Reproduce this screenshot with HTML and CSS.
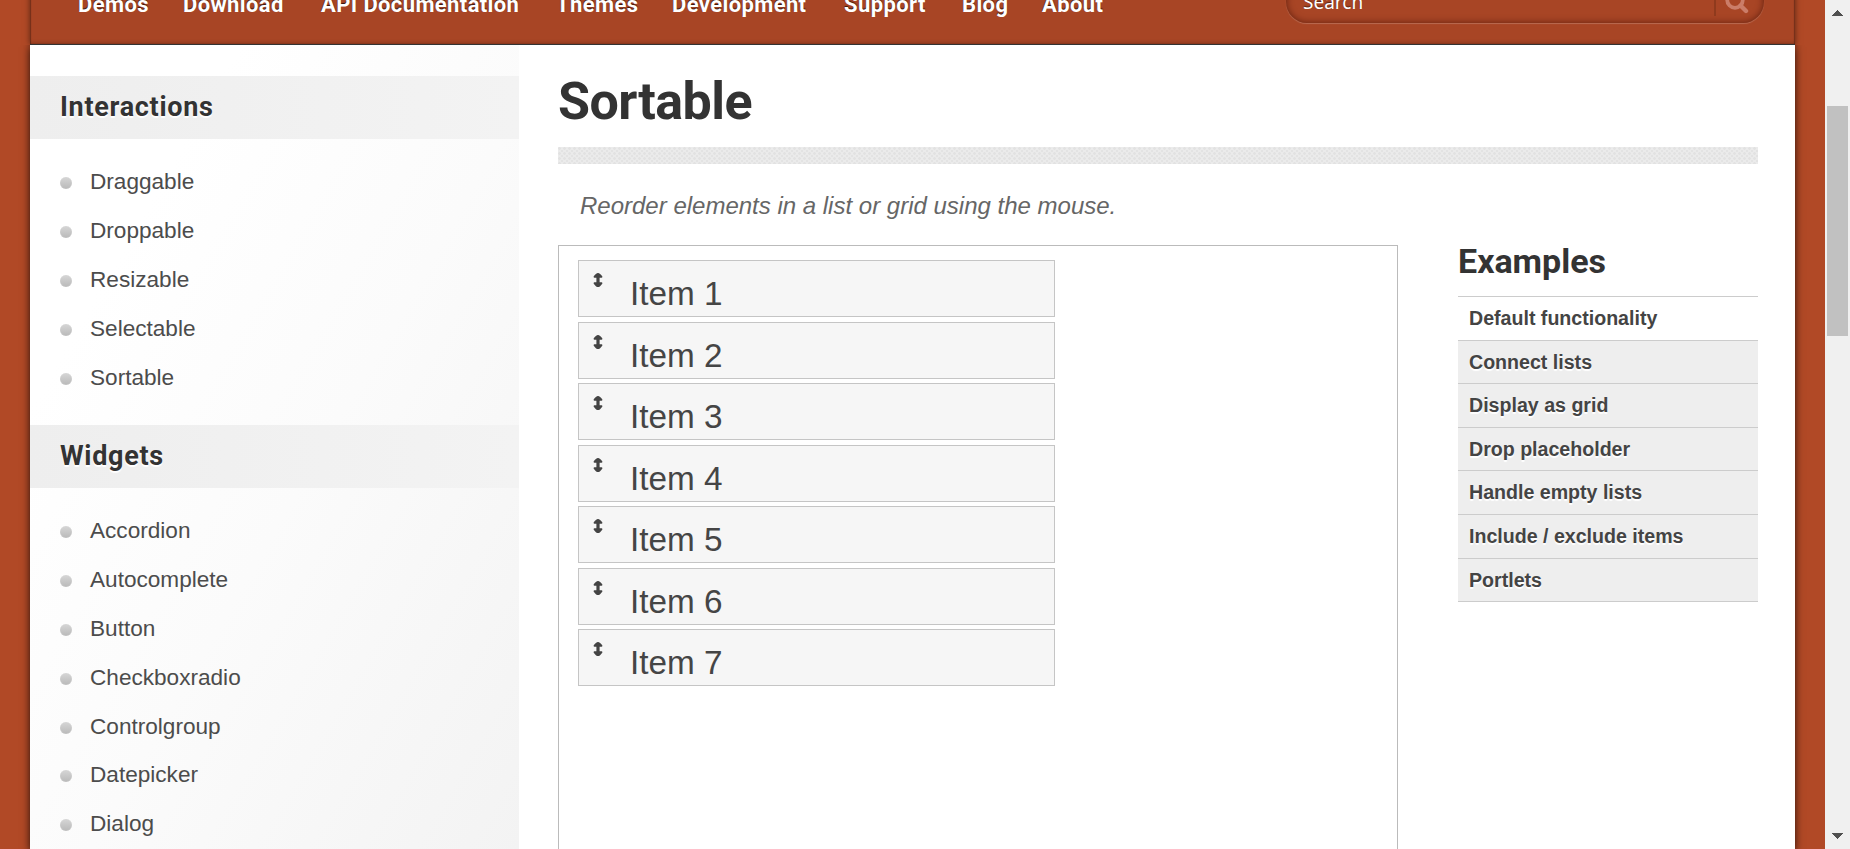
FILE: index.html
```html
<!DOCTYPE html>
<html lang="en">
<head>
<meta charset="utf-8">
<title>Sortable | jQuery UI</title>
<link rel="stylesheet" href="styles.css">
</head>
<body>
<svg class="defs" aria-hidden="true"><symbol id="updown" viewBox="0 0 10 14"><path d="M5 0 Q7 0 9.4 3.6 Q9.4 4.8 8.6 4.8 H6.6 V9.2 H8.6 Q9.4 9.2 9.4 10.4 Q7 14 5 14 Q3 14 .6 10.4 Q.6 9.2 1.4 9.2 H3.4 V4.8 H1.4 Q.6 4.8 .6 3.6 Q3 0 5 0 Z" fill="#444"/></symbol></svg>
<div class="viewport">
  <div class="page">
    <header class="header">
      <nav class="nav">
        <a class="n1">Demos</a><a class="n2">Download</a><a class="n3">API Documentation</a><a class="n4">Themes</a><a class="n5">Development</a><a class="n6">Support</a><a class="n7">Blog</a><a class="n8">About</a>
      </nav>
      <div class="search">
        <span class="search-text">Search</span>
        <span class="search-btn"><svg width="24" height="24" viewBox="0 0 24 24"><circle cx="10" cy="10" r="7.8" fill="none" stroke="#cb7d68" stroke-width="3.8"/><path d="M15.5 15.5 L21 21" stroke="#cb7d68" stroke-width="4.4" stroke-linecap="round"/></svg></span>
      </div>
    </header>
    <div class="content">
      <aside class="sidebar">
        <h3 class="band s1"><span>Interactions</span></h3>
        <ul class="links"><li>Draggable</li><li>Droppable</li><li>Resizable</li><li>Selectable</li><li>Sortable</li></ul>
        <h3 class="band s2"><span>Widgets</span></h3>
        <ul class="links"><li>Accordion</li><li>Autocomplete</li><li>Button</li><li>Checkboxradio</li><li>Controlgroup</li><li>Datepicker</li><li>Dialog</li></ul>
      </aside>
      <main class="main">
        <h1 class="title">Sortable</h1>
        <div class="rule"></div>
        <p class="desc">Reorder elements in a list or grid using the mouse.</p>
        <div class="cols">
          <div class="demo">
            <ul class="sortable">
              <li><svg class="ico"><use href="#updown"/></svg>Item 1</li>
              <li><svg class="ico"><use href="#updown"/></svg>Item 2</li>
              <li><svg class="ico"><use href="#updown"/></svg>Item 3</li>
              <li><svg class="ico"><use href="#updown"/></svg>Item 4</li>
              <li><svg class="ico"><use href="#updown"/></svg>Item 5</li>
              <li><svg class="ico"><use href="#updown"/></svg>Item 6</li>
              <li><svg class="ico"><use href="#updown"/></svg>Item 7</li>
            </ul>
          </div>
          <div class="examples">
            <h2><span>Examples</span></h2>
            <ul>
              <li class="active">Default functionality</li><li>Connect lists</li><li>Display as grid</li><li>Drop placeholder</li><li>Handle empty lists</li><li>Include / exclude items</li><li>Portlets</li>
            </ul>
          </div>
        </div>
      </main>
    </div>
  </div>
  <div class="scrollbar">
    <svg class="up" width="11" height="6" shape-rendering="crispEdges"><path d="M5.5 0 L11 6 H0 Z" fill="#505050"/></svg>
    <div class="thumb"></div>
    <svg class="down" width="11" height="6" shape-rendering="crispEdges"><path d="M5.5 6 L11 0 H0 Z" fill="#505050"/></svg>
  </div>
</div>
</body>
</html>
```
FILE: styles.css
```css
* { box-sizing: border-box; margin: 0; padding: 0; }
html, body { height: 849px; overflow: hidden; }
body { background: #b14926; color: #444; font-family: "Liberation Sans", Arial, sans-serif; }
ul { list-style: none; }
.defs { position: absolute; width: 0; height: 0; }
.viewport { display: flex; justify-content: space-between; height: 849px; padding-left: 30px; overflow: hidden; }
.page { width: 1765px; height: 849px; display: flex; flex-direction: column; }

.header { flex: none; height: 75px; margin-top: -30px; background: #a84525; border-bottom: 1px solid #333; padding: 30px 31px 0 48px; display: flex; justify-content: space-between; align-items: flex-start; box-shadow: 0 0 6px rgba(0,0,0,.5), inset 1px 0 1px rgba(0,0,0,.3), inset -1px 0 1px rgba(0,0,0,.3), inset 0 -3px 4px -2px rgba(0,0,0,.2); }
.nav { display: flex; margin-top: -7px; font: bold 22px/24px Roboto, sans-serif; letter-spacing: .38px; color: #fff; text-shadow: 0 -1px 1px rgba(0,0,0,.7); white-space: nowrap; }
.nav a { flex: none; }
.n1 { width: 105px; }
.n2 { width: 138px; }
.n3 { width: 235px; }
.n4 { width: 116px; }
.n5 { width: 172px; }
.n6 { width: 118px; }
.n7 { width: 80px; }
.n8 { width: 66px; }
.search { display: flex; justify-content: space-between; width: 478px; height: 43px; margin-top: -20px; padding-left: 17px; border-radius: 21px; background: #a84525; box-shadow: inset 0 0 7px rgba(60,10,0,.65), 0 1px 1px rgba(255,255,255,.2); color: #fff; }
.search-text { font: 19px/24px "Noto Sans", sans-serif; margin-top: 10px; text-shadow: 0 -1px 1px rgba(0,0,0,.5); }
.search-btn { width: 50px; height: 36px; border-left: 2px solid #8f3a1d; padding: 10px 0 0 9px; }

.content { flex: 1; min-height: 0; display: flex; overflow: hidden; background: #fff; box-shadow: 0 2px 8px rgba(0,0,0,.8); clip-path: inset(0 -20px); }
.sidebar { flex: none; width: 489px; padding-top: 31px; background: linear-gradient(120deg, #fff 22%, #fbfbfb 55%, #f3f3f3 100%); }
.band { height: 63px; padding-left: 30px; font: bold 27px/62px Roboto, sans-serif; letter-spacing: .7px; color: #333; background: linear-gradient(90deg, #eee, #f3f3f3); text-shadow: 0 2px 1px #fff; }
.links { padding: 19px 0 23px 31px; font-size: 22.6px; color: #4c4c4c; }
.links li { display: flex; align-items: center; height: 48.8px; line-height: 50px; }
.links li::before { content: ""; width: 12px; height: 12px; margin: 2px 18px 0 -1px; border-radius: 50%; background: linear-gradient(#d6d6d6, #b9b9b9); box-shadow: inset 0 0 1px #ddd; }

.main { width: 1200px; margin-left: 39px; display: flex; flex-direction: column; }
.title { flex: none; height: 102px; padding-top: 26px; font: bold 52px/61px Roboto, sans-serif; letter-spacing: -.5px; color: #333; }
.rule { flex: none; height: 17px; background: radial-gradient(circle at 1.5px 1.5px, #e2e2e2 1px, transparent 1.5px) 0 0 / 5px 5px, radial-gradient(circle at 4px 4px, #e3e3e3 .8px, transparent 1.3px) 0 0 / 5px 5px, #ebebeb; }
.desc { flex: none; height: 81px; padding: 28px 0 0 22px; font-size: 24px; line-height: 28px; font-style: italic; color: #666; }
.cols { flex: 1; min-height: 0; display: flex; justify-content: space-between; }
.demo { width: 840px; border: 1px solid #bbb; border-bottom: 0; padding: 14px 19px 0; }
.sortable { width: 477px; display: flex; flex-direction: column; gap: 4.5px; }
.sortable li { display: flex; height: 57px; border: 1px solid #c5c5c5; background: #f6f6f6; color: #454545; font-size: 33.3px; line-height: 66px; }
.ico { width: 10px; height: 14px; margin: 12px 27px 0 14px; flex: none; }
.examples { width: 300px; }
.examples h2 { height: 51px; font: bold 34px/32px Roboto, sans-serif; color: #333; }
.examples ul { border-top: 1px solid #ccc; }
.examples li { height: 43.6px; border-bottom: 1px solid #ccc; background: #eee; padding-left: 11px; font-weight: bold; font-size: 19.6px; line-height: 43px; color: #444; text-shadow: 0 2px 1px #fff; }
.examples .active { background: #fff; }

.scrollbar { width: 25px; background: #f0f0f0; display: flex; flex-direction: column; padding: 10px 2px; }
.up, .down { align-self: center; flex: none; }
.thumb { height: 230px; margin-top: 90px; margin-bottom: auto; background: #c1c1c1; }
```
